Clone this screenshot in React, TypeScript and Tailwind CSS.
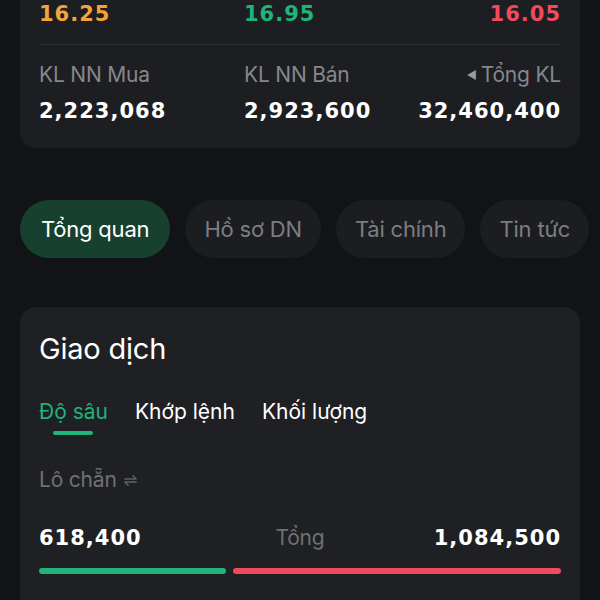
import React from "react";

const num = "font-['DejaVu_Sans',sans-serif] font-bold tracking-[1px]";
const ui = "font-['Inter','Noto_Sans',sans-serif]";

const stats = [
  { label: "KL NN Mua", value: "2,223,068" },
  { label: "KL NN Bán", value: "2,923,600" },
  { label: "Tổng KL", value: "32,460,400", caret: true },
];

const tabs = ["Tổng quan", "Hồ sơ DN", "Tài chính", "Tin tức"];

const SwapIcon = () => (
  <svg viewBox="0 0 16 16" className="w-[15px] h-[15px] ml-[6px] text-[#5f6065]" fill="none" stroke="currentColor" strokeWidth="1.6" strokeLinecap="round" strokeLinejoin="round">
    <path d="M2 6.5h12L10.5 3" />
    <path d="M14 9.5H2L5.5 13" />
  </svg>
);

export default function App() {
  return (
    <div className={`w-[600px] h-[600px] overflow-hidden bg-[#121316] ${ui}`}>
      {/* summary card */}
      <div className="mx-5 rounded-b-2xl bg-[#1d1e21] px-[19px] pb-[23px]">
        <div className={`flex justify-between text-[21px] leading-[28px] ${num}`}>
          <span className="text-[#f4a33b] w-[205px]">16.25</span>
          <span className="text-[#20b47a] flex-1">16.95</span>
          <span className="text-[#ef4b5c]">16.05</span>
        </div>
        <div className="mt-4 h-px bg-[#2b2c30]" />
        <div className="mt-[17px] flex justify-between">
          {stats.map((s, i) => (
            <div key={i} className={`flex flex-col ${i === 0 ? "w-[205px]" : i === 1 ? "flex-1" : "items-end"}`}>
              <span className="flex items-center text-[21px] leading-[26px] tracking-[-0.2px] text-[#86878b]">
                {s.caret && <span className="mr-[4px] text-[11px] text-[#9a9ba0]">◀</span>}
                {s.label}
              </span>
              <span className={`mt-[9px] text-[21px] leading-[28px] text-white ${num}`}>{s.value}</span>
            </div>
          ))}
        </div>
      </div>

      {/* tabs */}
      <div className="mt-[52px] flex gap-[15px] pl-5 overflow-hidden whitespace-nowrap">
        {tabs.map((t, i) => (
          <div
            key={t}
            className={`shrink-0 h-[58px] rounded-full flex items-center text-[22px] tracking-[-0.2px] ${
              i === 0 ? "px-[21px] bg-[#17402f] text-white" : "px-[19px] bg-[#1c1d20] text-[#7c7d82]"
            }`}
          >
            {t}
          </div>
        ))}
      </div>

      {/* trading card */}
      <div className="mx-5 mt-[49px] rounded-t-2xl bg-[#1f2023] px-[19px] pt-[25px] pb-10">
        <h2 className="text-[29px] leading-[34px] text-white tracking-[-0.2px]">Giao dịch</h2>
        <div className="mt-[32px] flex gap-[27px] text-[21px] leading-[28px]">
          <div className="flex flex-col items-center">
            <span className="text-[#20b47a]">Độ sâu</span>
            <span className="mt-[5px] h-[4px] w-[40px] rounded-full bg-[#20b47a]" />
          </div>
          <span className="text-white">Khớp lệnh</span>
          <span className="text-white">Khối lượng</span>
        </div>
        <div className="mt-[31px] flex items-center text-[21px] leading-[28px] text-[#6f7075] tracking-[-0.2px]">
          Lô chẵn
          <SwapIcon />
        </div>
        <div className="mt-[30px] grid grid-cols-[1fr_auto_1fr] items-center">
          <span className={`text-[21px] leading-[28px] text-white ${num}`}>618,400</span>
          <span className="text-[21px] leading-[28px] text-[#6f7075] tracking-[-0.2px]">Tổng</span>
          <span className={`text-right text-[21px] leading-[28px] text-white ${num}`}>1,084,500</span>
        </div>
        <div className="mt-[16px] flex gap-[7px]">
          <div className="h-[6px] w-[187px] rounded-full bg-[#20b47a]" />
          <div className="h-[6px] flex-1 rounded-full bg-[#ef4b5c]" />
        </div>
      </div>
    </div>
  );
}
